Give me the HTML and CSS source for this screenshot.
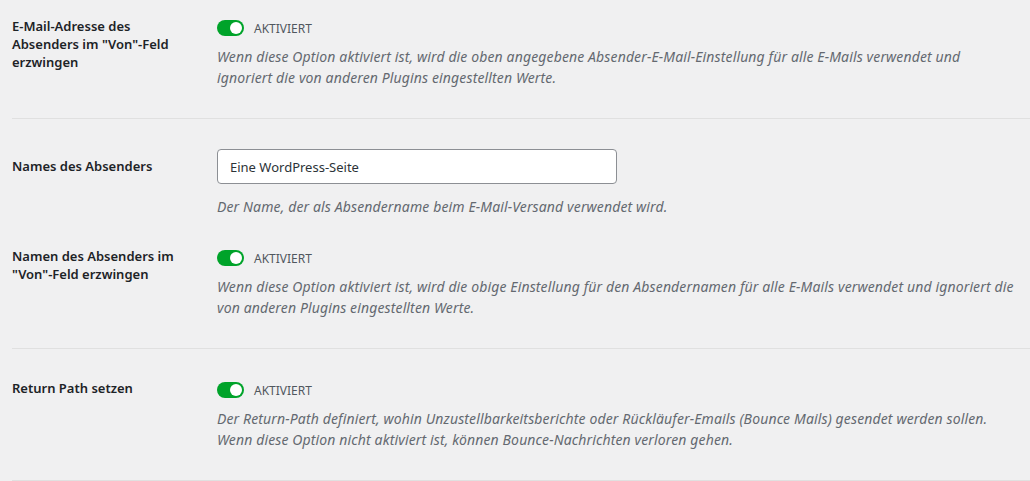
FILE: index.html
```html
<!DOCTYPE html>
<html lang="de">
<head>
<meta charset="utf-8">
<title>Einstellungen</title>
<link rel="stylesheet" href="styles.css">
</head>
<body>
<div class="settings">
  <div class="row row-first">
    <div class="label">E-Mail-Adresse des Absenders im "Von"-Feld erzwingen</div>
    <div class="field">
      <div class="toggle-line"><span class="toggle"><span class="knob"></span></span><span class="toggle-text">AKTIVIERT</span></div>
      <p class="desc">Wenn diese Option aktiviert ist, wird die oben angegebene Absender-E-Mail-Einstellung für alle E-Mails verwendet und ignoriert die von anderen Plugins eingestellten Werte.</p>
    </div>
  </div>
  <div class="row row-input no-border">
    <div class="label label-input">Names des Absenders</div>
    <div class="field">
      <input class="text-input" type="text" value="Eine WordPress-Seite">
      <p class="desc desc-input">Der Name, der als Absendername beim E-Mail-Versand verwendet wird.</p>
    </div>
  </div>
  <div class="row row-after">
    <div class="label">Namen des Absenders im "Von"-Feld erzwingen</div>
    <div class="field">
      <div class="toggle-line"><span class="toggle"><span class="knob"></span></span><span class="toggle-text">AKTIVIERT</span></div>
      <p class="desc">Wenn diese Option aktiviert ist, wird die obige Einstellung für den Absendernamen für alle E-Mails verwendet und ignoriert die von anderen Plugins eingestellten Werte.</p>
    </div>
  </div>
  <div class="row">
    <div class="label">Return Path setzen</div>
    <div class="field">
      <div class="toggle-line"><span class="toggle"><span class="knob"></span></span><span class="toggle-text">AKTIVIERT</span></div>
      <p class="desc">Der Return-Path definiert, wohin Unzustellbarkeitsberichte oder Rückläufer-Emails (Bounce Mails) gesendet werden sollen.<br>Wenn diese Option nicht aktiviert ist, können Bounce-Nachrichten verloren gehen.</p>
    </div>
  </div>
</div>
</body>
</html>
```
FILE: styles.css
```css
html, body {
  margin: 0;
  padding: 0;
  background: #f0f0f1;
}
body {
  font-family: "Noto Sans", "Open Sans", sans-serif;
  color: #1d2327;
  font-size: 13px;
}
.settings {
  padding-left: 12px;
}
.row {
  display: flex;
  padding: 30px 0 30px 0;
  border-bottom: 1px solid #e0e0e0;
}
.row-first {
  padding-top: 17px;
}
.row.no-border {
  border-bottom: none;
  padding-bottom: 0;
}
.row-after {
  padding-top: 30px;
}
.label {
  width: 175px;
  flex: none;
  margin-right: 30px;
  font-weight: 600;
  font-size: 13px;
  line-height: 18px;
}
.label-input {
  padding-top: 8px;
}
.field {
  flex: 1;
  padding-right: 16px;
}
.toggle-line {
  display: flex;
  align-items: center;
  height: 22px;
}
.toggle {
  width: 27px;
  height: 16px;
  border-radius: 8px;
  background: #00a32a;
  position: relative;
  flex: none;
}
.knob {
  position: absolute;
  width: 12px;
  height: 12px;
  border-radius: 50%;
  background: #fff;
  top: 2px;
  right: 2px;
}
.toggle-text {
  margin-left: 10px;
  font-size: 12px;
  color: #50575e;
  text-transform: uppercase;
}
.desc {
  margin: 7px 0 0 0;
  font-style: italic;
  font-size: 14px;
  line-height: 21px;
  letter-spacing: 0.13px;
  color: #646970;
}
.desc-input {
  margin-top: 12px;
}
.text-input {
  display: block;
  box-sizing: border-box;
  width: 400px;
  height: 35px;
  margin: 0;
  padding: 0 12px;
  border: 1px solid #8c8f94;
  border-radius: 4px;
  background: #fff;
  font-family: inherit;
  font-size: 13px;
  color: #2c3338;
}
```
